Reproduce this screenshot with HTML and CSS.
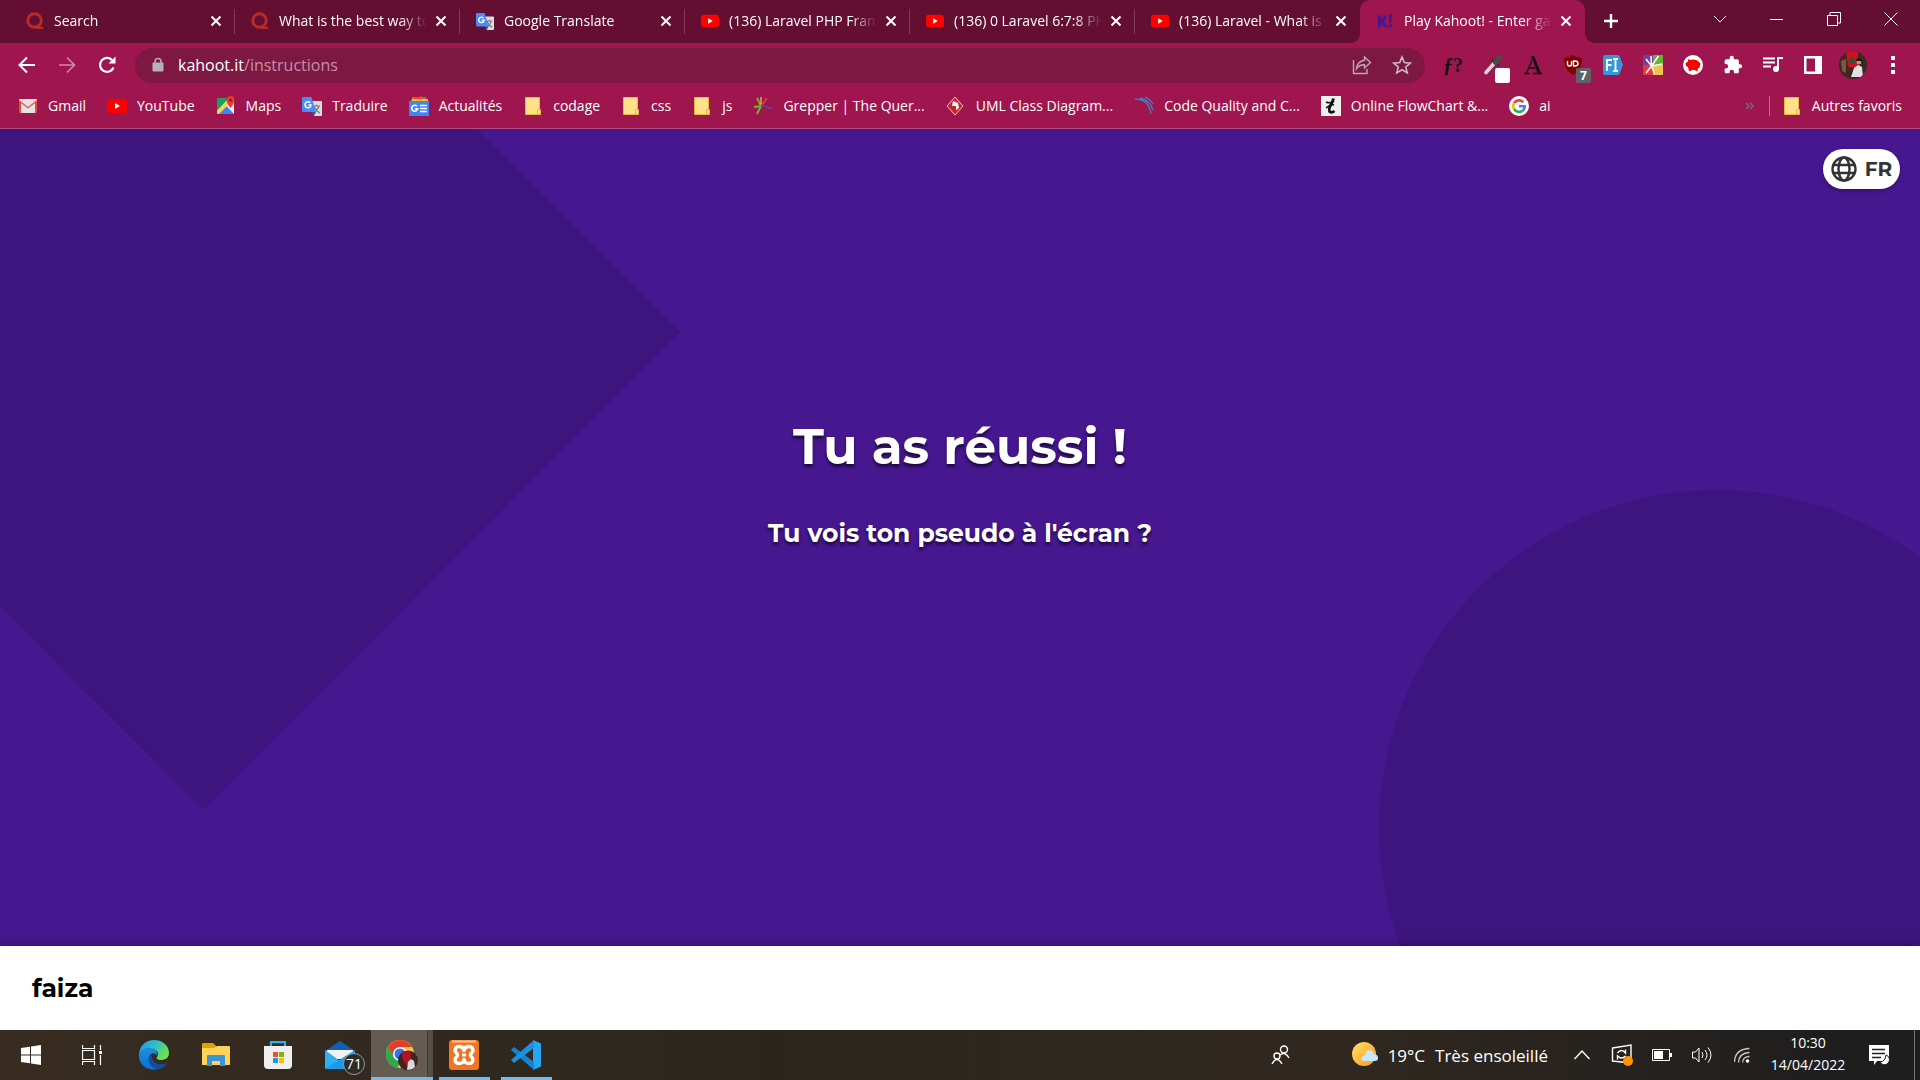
FILE: index.html
```html
<!DOCTYPE html>
<html lang="fr">
<head>
<meta charset="utf-8">
<title>Play Kahoot! - Enter game PIN here!</title>
<link rel="stylesheet" href="styles.css">
</head>
<body>
<svg class="sprite" aria-hidden="true">
  <symbol id="close" viewBox="0 0 12 12"><path d="M1.500 1.500l9 9M10.500 1.500l-9 9" stroke="#fff" stroke-width="2" fill="none"/></symbol>
  <symbol id="quora" viewBox="0 0 20 20"><circle cx="9.500" cy="9.500" r="7.500" fill="none" stroke="#b92b27" stroke-width="3.200"/><path d="M9 15h4l2 1.500h4V19h-6q-2.500 0-4-4z" fill="#b92b27"/></symbol>
  <symbol id="youtube" viewBox="0 0 20 20"><rect y="3" width="20" height="14" rx="3" fill="#f00"/><path d="M8 7v6l5-3z" fill="#fff"/></symbol>
  <symbol id="translate" viewBox="0 0 20 20"><path d="M8 5h11q1 0 1 1v13q0 1-1 1h-7z" fill="#dcdcdc"/><path d="M11 10h7M14.500 8.500V10M12 10q2 5 6 7M17 10q-1 4-5 6.500" stroke="#6b7f86" stroke-width="1.200" fill="none"/><path d="M1 1h8.500L14 16H1.500Q0 16 0 14.500V2q0-1 1-1z" fill="#4a8cf5"/><path d="M14 16h-4l2 4z" fill="#2d5ab8"/><path d="M8.300 6.800a3 3 0 1 0 .7 2.200H6.300" stroke="#fff" stroke-width="1.500" fill="none"/></symbol>
  <symbol id="folder" viewBox="0 0 20 20"><path d="M2.500 1.500h14v12h1v5h-15z" fill="#ffe28a" stroke="#e5b93c"/><path d="M14.500 18v-4q0-1 2-1" fill="none" stroke="#e5b93c"/></symbol>
</svg>

<header class="browser">
  <div class="tab-strip">
    <div class="tabs">
      <div class="tab"><svg class="favicon"><use href="#quora"/></svg><span class="tab-title">Search</span><button class="tab-close" aria-label="Fermer"><svg><use href="#close"/></svg></button></div>
      <div class="tab"><svg class="favicon"><use href="#quora"/></svg><span class="tab-title">What is the best way to</span><button class="tab-close" aria-label="Fermer"><svg><use href="#close"/></svg></button></div>
      <div class="tab"><svg class="favicon"><use href="#translate"/></svg><span class="tab-title">Google Translate</span><button class="tab-close" aria-label="Fermer"><svg><use href="#close"/></svg></button></div>
      <div class="tab"><svg class="favicon"><use href="#youtube"/></svg><span class="tab-title">(136) Laravel PHP Fram</span><button class="tab-close" aria-label="Fermer"><svg><use href="#close"/></svg></button></div>
      <div class="tab"><svg class="favicon"><use href="#youtube"/></svg><span class="tab-title">(136) 0 Laravel 6:7:8 PH</span><button class="tab-close" aria-label="Fermer"><svg><use href="#close"/></svg></button></div>
      <div class="tab"><svg class="favicon"><use href="#youtube"/></svg><span class="tab-title">(136) Laravel - What is</span><button class="tab-close" aria-label="Fermer"><svg><use href="#close"/></svg></button></div>
      <div class="tab active"><svg class="favicon" viewBox="0 0 20 20"><path d="M2 4h4v5l3-5h4l-4 6 4 7H9l-3-5v5H2zM14 3l4-1-1 10h-2zM14 14h4l-1 3h-3z" fill="#46178f"/></svg><span class="tab-title">Play Kahoot! - Enter ga</span><button class="tab-close" aria-label="Fermer"><svg><use href="#close"/></svg></button></div>
    </div>
    <button class="new-tab" aria-label="Nouvel onglet"><svg width="16" height="16" viewBox="0 0 16 16"><path d="M8 1v14M1 8h14" stroke="#fff" stroke-width="2.400"/></svg></button>
    <div class="window-controls">
      <button aria-label="Rechercher"><svg width="14" height="14" viewBox="0 0 14 14"><path d="M1 4l6 6 6-6" stroke="#fff" fill="none"/></svg></button>
      <button aria-label="Réduire"><svg width="14" height="14" viewBox="0 0 14 14"><path d="M0 7.500h13" stroke="#fff"/></svg></button>
      <button aria-label="Restaurer"><svg width="14" height="14" viewBox="0 0 14 14"><path d="M.5 3.500h10v10H.5zM3 3.500V.5h10.500V11H11" stroke="#fff" fill="none"/></svg></button>
      <button aria-label="Fermer"><svg width="14" height="14" viewBox="0 0 14 14"><path d="M.5.5l13 13M13.500.5l-13 13" stroke="#fff"/></svg></button>
    </div>
  </div>

  <div class="toolbar">
    <nav class="nav-buttons">
      <button aria-label="Retour"><svg width="20" height="20" viewBox="0 0 20 20"><path d="M18 10H3M10 2.500L2.500 10l7.500 7.500" stroke="#fff" stroke-width="2" fill="none"/></svg></button>
      <button aria-label="Avancer"><svg width="20" height="20" viewBox="0 0 20 20"><path d="M2 10h15M10 2.500l7.500 7.500-7.500 7.500" stroke="#cf8aa7" stroke-width="1.600" fill="none"/></svg></button>
      <button aria-label="Actualiser"><svg width="20" height="20" viewBox="0 0 20 20"><path d="M16.500 12.500a7 7 0 1 1-1.500-7.600" stroke="#fff" stroke-width="2.200" fill="none"/><path d="M18.500 1.500v7h-7z" fill="#fff"/></svg></button>
    </nav>
    <div class="address">
      <svg width="12" height="16" viewBox="0 0 12 16"><path d="M3 7V4.500a3 3 0 0 1 6 0V7" stroke="#b9a7b0" stroke-width="1.600" fill="none"/><rect x=".5" y="5.500" width="11" height="9" rx="1" fill="#b9b0b5"/></svg>
      <label class="host" for="path">kahoot.it</label><input id="path" class="path" type="text" value="/instructions">
      <button aria-label="Partager"><svg width="20" height="20" viewBox="0 0 20 20"><path d="M1.500 5v13.500H15V14" stroke="#c3a5b2" stroke-width="1.400" fill="none"/><path d="M12.500 2l6 5.500-6 5.500v-3.200q-5-.3-8 4 .5-7.300 8-8.500z" stroke="#c3a5b2" stroke-width="1.400" fill="none"/></svg></button>
      <button aria-label="Favori"><svg width="20" height="20" viewBox="0 0 20 20"><path d="M10 2l2.300 5.600 6 .5-4.600 3.900 1.500 5.900L10 14.700l-5.200 3.200L6.300 12 1.700 8.100l6-.5z" stroke="#ccbac2" stroke-width="1.600" fill="none"/></svg></button>
    </div>
    <div class="extensions">
      <button class="fx" aria-label="WhatFont"><i>ƒ</i>?</button>
      <button aria-label="Pipette"><svg width="20" height="20" viewBox="0 0 20 20"><path d="M3 17.500l8-9" stroke="#d9d9d9" stroke-width="3.600" stroke-linecap="round"/><path d="M9.500 5l5.500 5" stroke="#333" stroke-width="2.600" stroke-linecap="round"/><path d="M12.500 7.500l4-4.500" stroke="#4a4a4a" stroke-width="5" stroke-linecap="round"/></svg><span class="badge blank"></span></button>
      <button aria-label="Polices"><svg width="20" height="20" viewBox="0 0 20 20"><path d="M1 18.500h6M10 18.500h9M3.500 18L10 3M5 13h8" stroke="#111" stroke-width="1.400"/><path d="M8 1h3l7 17h-4z" fill="#111"/><path d="M9 4l5.500 14" stroke="#9f154e" stroke-width=".6"/></svg></button>
      <button aria-label="uBlock"><svg width="20" height="20" viewBox="0 0 20 20"><path d="M10 0q4 3 9 3 0 13-9 17Q1 16 1 3q5 0 9-3z" fill="#800000"/><path d="M4.500 6v3q0 2 2 2t2-2V6M10.500 6v5h1.500q3 0 3-2.500T12 6z" stroke="#fff" stroke-width="1.400" fill="none"/></svg><span class="badge">7</span></button>
      <button aria-label="Fontface"><svg width="20" height="20" viewBox="0 0 20 20"><path d="M2 0h12q2 0 2.500 1L20 10l-3.500 9q-.5 1-2.500 1H2q-2 0-2-2V2q0-2 2-2z" fill="#3498db"/><path d="M4 16V5h5M4 10h4.500M10 4h5M10 16h5M12.500 4v12" stroke="#fff" stroke-width="1.800" fill="none"/></svg></button>
      <button aria-label="Grepper"><svg width="20" height="20" viewBox="0 0 20 20"><path d="M0 0h10v10H0z" fill="#7040a0"/><path d="M10 0h10v10H10z" fill="#63b32e"/><path d="M0 10h10v10H0z" fill="#e8373a"/><path d="M10 10h10v10H10z" fill="#f2c14a"/><path d="M8.500 11L3 4M8.500 11L8 1M8.500 11l7-10M8.500 11l11-2M8.500 11l3 8M8.500 11L3 18" stroke="#fff" stroke-width="1.500"/></svg></button>
      <button aria-label="Piggy"><svg width="20" height="20" viewBox="0 0 20 20"><circle cx="10" cy="10" r="10" fill="#fff"/><path d="M2.500 8l2-1 1-3 2 1q5-1.500 8 1.500l2 2-1 4-2 1.500v2h-2v-1H8v1H6l-1-4-2-1z" fill="#f00"/></svg></button>
      <button aria-label="Extensions"><svg width="20" height="20" viewBox="0 0 24 24"><path d="M20.500 11H19V7c0-1.100-.9-2-2-2h-4V3.500a2.500 2.500 0 0 0-5 0V5H4c-1.100 0-2 .9-2 2v3.800h1.500a2.700 2.700 0 0 1 0 5.400H2V20c0 1.100.9 2 2 2h3.800v-1.500a2.700 2.700 0 0 1 5.400 0V22H17c1.100 0 2-.9 2-2v-4h1.500a2.500 2.500 0 0 0 0-5z" fill="#fff"/></svg></button>
      <button aria-label="Médias"><svg width="20" height="20" viewBox="0 0 20 20"><path d="M0 3.500h12M0 7.500h12M0 11.500h8" stroke="#fff" stroke-width="2"/><path d="M15 14V3h5" stroke="#fff" stroke-width="2" fill="none"/><circle cx="13" cy="14" r="3" fill="#fff"/></svg></button>
      <button aria-label="Panneau latéral"><svg width="18" height="18" viewBox="0 0 18 18"><path d="M0 0h18v18H0zM2.500 2.500v13H11v-13z" fill="#fff" fill-rule="evenodd"/></svg></button>
      <button aria-label="Profil"><svg width="28" height="28" viewBox="0 0 28 28"><clipPath id="round"><circle cx="14" cy="14" r="14"/></clipPath><g clip-path="url(#round)"><path d="M0 0h28v28H0z" fill="#3b2a22"/><path d="M7 0h12v17l-10-1z" fill="#cf1220"/><path d="M13 5l1 3 3 .5-2 2 .5 3-2.500-1.500-2.500 1.500.5-3-2-2 3-.5z" fill="#185c2c"/><path d="M2 10l5-2v14l-4-2z" fill="#7a5a3c"/><path d="M15 17l4-3 4 2 1 10H12z" fill="#e4e0e2"/><circle cx="20" cy="11" r="2.500" fill="#c09078"/><path d="M17 10q0-3 3-3t4 7l-2-4z" fill="#1d1514"/></g></svg></button>
      <button aria-label="Menu"><svg width="4" height="18" viewBox="0 0 4 18"><path d="M0 0h4v4H0zM0 7h4v4H0zM0 14h4v4H0z" fill="#fff"/></svg></button>
    </div>
  </div>

  <nav class="bookmarks">
    <a href="#"><svg viewBox="0 0 20 20"><path d="M1 3h18v14H1z" fill="#e3e3e3"/><path d="M1 17V4l9 7 9-7v13h-2V7l-7 5.500L3 7v10z" fill="#e04a3f"/></svg>Gmail</a>
    <a href="#"><svg><use href="#youtube"/></svg>YouTube</a>
    <a href="#"><svg viewBox="0 0 20 20"><path d="M1 2h17v16H1z" fill="#eceff1"/><path d="M1 2h12L1 15z" fill="#1e9e58"/><path d="M1 18l8.500-9L18 18z" fill="#4285f4"/><path d="M1 15L14 3v4L3 18H1z" fill="#fdd34c"/><path d="M14.500 0a4 4 0 0 1 4 4q0 3-4 8-4-5-4-8a4 4 0 0 1 4-4z" fill="#e33b2e"/><circle cx="14.500" cy="4" r="1.500" fill="#8c1d18"/></svg>Maps</a>
    <a href="#"><svg><use href="#translate"/></svg>Traduire</a>
    <a href="#"><svg viewBox="0 0 20 20"><path d="M3 1l14 0v6H3z" fill="#34a853"/><path d="M2 3l11-3 2 6H2z" fill="#ea4335"/><path d="M3 3h16v4H3z" fill="#fbbc04"/><path d="M0 5h20v15H0z" fill="#4285f4"/><path d="M8 10.200a3 3 0 1 0 .7 2.500H6M11 9.500h7M11 12.500h7M11 15.500h7" stroke="#fff" stroke-width="1.600" fill="none"/></svg>Actualités</a>
    <a href="#"><svg><use href="#folder"/></svg>codage</a>
    <a href="#"><svg><use href="#folder"/></svg>css</a>
    <a href="#"><svg><use href="#folder"/></svg>js</a>
    <a href="#"><svg viewBox="0 0 20 20"><path d="M8 10L4 2M8 10L1 11M8 10L4 18" stroke="#6ab42f" stroke-width="2"/><path d="M8 10V1" stroke="#d9b23a" stroke-width="1.500"/><path d="M8 10l6-8" stroke="#e5443b" stroke-width="1.500"/><path d="M8 9l11 4" stroke="#5c4aa0" stroke-width="1.500"/></svg>Grepper | The Quer...</a>
    <a href="#"><svg viewBox="0 0 20 20"><path d="M9 1l8 9-8 9-8-9z" fill="#c8232c" stroke="#f0c9c9"/><path d="M7 5l5 2 1 5-3 2 0-4-4 0z" fill="#fff"/></svg>UML Class Diagram...</a>
    <a href="#"><svg viewBox="0 0 20 20"><path d="M1 3q14 0 16 15M6 2q10 2 13 12M11 1q5 2 8 7" stroke="#4b7dbd" stroke-width="1.300" fill="none"/></svg>Code Quality and C...</a>
    <a href="#"><svg viewBox="0 0 20 20"><path d="M0 0h20v20H0z" fill="#f0f0f0"/><path d="M12.500 2.500q-1 4-3 7t-1 6q2 2 5-.5" stroke="#111" stroke-width="2.800" fill="none"/><path d="M5 6q4 2 8-1M5 12q5-4 8-3" stroke="#111" stroke-width="1.600" fill="none"/></svg>Online FlowChart &amp;...</a>
    <a href="#"><svg viewBox="0 0 20 20"><circle cx="10" cy="10" r="10" fill="#fff"/><g fill="none" stroke-width="2.600"><path d="M14.200 6.200A5.800 5.800 0 0 0 5 7.200" stroke="#ea4335"/><path d="M5 7.200a5.800 5.800 0 0 0 0 5.600" stroke="#fbbc05"/><path d="M5 12.800a5.800 5.800 0 0 0 8.800 1.700" stroke="#34a853"/><path d="M13.800 14.500a5.500 5.500 0 0 0 2-4.200H10" stroke="#4285f4"/></g></svg>ai</a>
    <button class="overflow" aria-label="Autres"><svg width="10" height="8" viewBox="0 0 10 8"><path d="M1 1l3 3-3 3M5 1l3 3-3 3" stroke="#7d6470" stroke-width="1.500" fill="none"/></svg></button>
    <a class="others" href="#"><svg><use href="#folder"/></svg>Autres favoris</a>
  </nav>
</header>

<main class="game">
  <svg class="shapes" viewBox="0 0 1920 817" preserveAspectRatio="xMidYMid slice" aria-hidden="true"><path d="M203-274L680 203 203 681-274 203z"/><circle cx="1717" cy="699" r="338"/></svg>
  <button class="language"><svg width="26" height="26" viewBox="0 0 26 26" fill="none" stroke="#333" stroke-width="2.400"><circle cx="13" cy="13" r="11.500"/><ellipse cx="13" cy="13" rx="5.500" ry="11.500"/><path d="M2.500 9h21M2.500 17h21"/></svg>FR</button>
  <h1>Tu as réussi !</h1>
  <p>Tu vois ton pseudo à l'écran ?</p>
</main>
<footer class="player">faiza</footer>

<div class="taskbar">
  <div class="apps">
    <button aria-label="Démarrer"><svg width="20" height="20" viewBox="0 0 20 20"><path d="M0 3l9-1.300V9.500H0zM10 1.500L20 0v9.500H10zM0 10.500h9v7.800L0 17zM10 10.500h10V20l-10-1.500z" fill="#fff"/></svg></button>
    <button aria-label="Vue des tâches"><svg width="20" height="20" viewBox="0 0 20 20"><path d="M.5 0v3.500h12V0M.5 5.500h12v9H.5zM.5 20v-3.500h12V20M18.500 0v5M18.500 10v10" stroke="#fff" stroke-width="1.200" fill="none"/><path d="M17 6h3v3h-3z" fill="#fff"/></svg></button>
    <button aria-label="Edge"><svg width="30" height="30" viewBox="0 0 30 30"><defs><linearGradient id="e1" x1="0" y1="0" x2="1" y2=".5"><stop offset=".1" stop-color="#1f9de0"/><stop offset=".55" stop-color="#34c0c4"/><stop offset="1" stop-color="#6be04a"/></linearGradient><linearGradient id="e2" x1="0" y1="0" x2="0" y2="1"><stop offset="0" stop-color="#1b8fe0"/><stop offset="1" stop-color="#0d6fd0"/></linearGradient></defs><path d="M0 14C1 5 7 0 15 0c9 0 15 6 15 13 0 5-4 7-8 7-4 0-5-2-4-3 3-5-1-8-6-8-6 0-10 3-12 5z" fill="url(#e1)"/><path d="M0 14c2-5 7-7 11-6 5 0 8 4 7 7-4-4-9 0-8 5 1 6 6 9 10 9C9 32-1 25 0 14z" fill="url(#e2)"/><path d="M10 17c-2 9 7 12 10 12 4-1 7-4 8-6-6 3-16 1-15-8-1 0-2 1-3 2z" fill="#104f9e"/></svg></button>
    <button aria-label="Explorateur"><svg width="28" height="24" viewBox="0 0 28 24"><path d="M0 1q0-1 1-1h10l3 3v4H0z" fill="#e5a000"/><path d="M0 5h12l3-2h12q1 0 1 1v17q0 1-1 1H0z" fill="#ffd35c"/><path d="M5 23V13q0-1 1-1h16q1 0 1 1v10h-5v-5h-8v5z" fill="#3b93d9"/></svg></button>
    <button aria-label="Store"><svg width="30" height="30" viewBox="0 0 30 30"><path d="M8 7V2.200h14V7" stroke="#2bb0ef" stroke-width="2.200" fill="none"/><path d="M1 6h28v19q0 4-4 4H5q-4 0-4-4z" fill="#efefef"/><path d="M10 12h5v5h-5z" fill="#f25022"/><path d="M16 12h5v5h-5z" fill="#7fba00"/><path d="M10 18h5v5h-5z" fill="#00a4ef"/><path d="M16 18h5v5h-5z" fill="#ffb900"/></svg></button>
    <button aria-label="Courrier"><svg width="30" height="30" viewBox="0 0 30 30"><path d="M0 11L15 1l15 10v5H0z" fill="#0f5fb4"/><path d="M2 10h26v9H2z" fill="#f2f2f2"/><path d="M0 10l15 11-15 8z" fill="#2cb0ee"/><path d="M30 10L0 29h30z" fill="#1b9be8"/></svg><span class="count">71</span></button>
    <button class="open current" aria-label="Chrome"><svg width="32" height="32" viewBox="0 0 32 32"><circle cx="14" cy="15" r="14" fill="#fcc934"/><path d="M1.900 8A14 14 0 0 1 26.100 8H14l-6 10z" fill="#e33b2e"/><path d="M1.900 8l7 11 5 2-2 8A14 14 0 0 1 1.900 8z" fill="#2da94f"/><circle cx="14" cy="15" r="7" fill="#fff"/><circle cx="14" cy="15" r="5.500" fill="#2f73e8"/><circle cx="22" cy="21.500" r="10" fill="#40241f"/><path d="M16 14q6-4 9 0l-1 13q-8-1-8-13z" fill="#b51226"/><path d="M22 23l3-3 3 2 1 6q-3 3-8 3z" fill="#ddd8da"/></svg></button>
    <button class="open" aria-label="XAMPP"><svg width="30" height="30" viewBox="0 0 30 30"><rect width="30" height="30" rx="3" fill="#f07522"/><path d="M3 1.500h24" stroke="#ffc79d" stroke-width="2"/><path d="M15 10.500C14.500 7 12 6.500 10 6.500 6 6.500 5 11 7.500 13q2 2 0 4C5 19 6 23.500 10 23.500c2 0 4.500-.5 5-4 .5 3.500 3 4 5 4 4 0 5-4.500 2.500-6.500q-2-2 0-4C25 11 24 6.500 20 6.500c-2 0-4.500.5-5 4z" stroke="#fff" stroke-width="3.400" fill="none" stroke-linejoin="round"/><path d="M13 15h4" stroke="#fff" stroke-width="3"/></svg></button>
    <button class="open" aria-label="VS Code"><svg width="30" height="30" viewBox="0 0 30 30"><path d="M22 0l8 3.500v23L22 30z" fill="#27a4f2"/><path d="M0 10l3-3 20 15v8z" fill="#1584cf"/><path d="M0 20l3 3L23 8V0z" fill="#1b90de"/></svg></button>
  </div>
  <div class="tray">
    <button class="people" aria-label="Contacts"><svg width="20" height="20" viewBox="0 0 20 20" stroke="#fff" stroke-width="1.400" fill="none"><circle cx="13" cy="4.500" r="3.500"/><path d="M9 10q5-4 9 3"/><circle cx="6" cy="11" r="3"/><path d="M1 19q5-9 10 0"/></svg></button>
    <button class="weather"><svg width="26" height="26" viewBox="0 0 26 26"><defs><linearGradient id="sun" x1="0" y1="0" x2="1" y2="1"><stop offset="0" stop-color="#ffdf6b"/><stop offset="1" stop-color="#ff9b17"/></linearGradient></defs><circle cx="12" cy="12" r="12" fill="url(#sun)"/><path d="M12 19q-3-.5-2.500-3T13 13q0-4 4-5 4 0 5 4 4 .5 4 4t-4 3z" fill="#c9e6fb"/></svg><span>19°C</span><span>Très ensoleillé</span></button>
    <button aria-label="Icônes cachées"><svg width="16" height="16" viewBox="0 0 16 16"><path d="M.5 12L8 4l7.500 8" stroke="#fff" stroke-width="1.400" fill="none"/></svg></button>
    <button aria-label="Mises à jour"><svg width="22" height="22" viewBox="0 0 22 22"><path d="M1.500 4L20 1v18L1.500 17z" stroke="#fff" stroke-width="1.400" fill="none"/><path d="M6.500 9q4-5 8 0V5.500M14.500 12q-4 4-8 0v3.500" stroke="#fff" stroke-width="1.400" fill="none"/><circle cx="17" cy="17" r="5" fill="#ff9500"/></svg></button>
    <button aria-label="Batterie"><svg width="20" height="12" viewBox="0 0 20 12"><path d="M.5.5h17v11H.5z" stroke="#fff" fill="none"/><path d="M2 2h9v8H2zM18 4h2v4h-2z" fill="#fff"/></svg></button>
    <button aria-label="Volume"><svg width="20" height="18" viewBox="0 0 20 18"><path d="M.5 6h3L7 2v14l-3.500-4h-3zM10 6q2 3 0 6M13 4q4 5 0 10M16 1.500q6 7.500 0 15" stroke="#fff" fill="none"/></svg></button>
    <button aria-label="Wi-Fi"><svg width="16" height="16" viewBox="0 0 16 16"><path d="M.5 15Q1 2 15.500 1.500M4.500 15.500Q5 6 15.500 5.500M8.500 15.500q.5-6 7-6" stroke="#c9c6c2" stroke-width="1.300" fill="none"/><circle cx="13.500" cy="14" r="1.800" fill="#fff"/></svg></button>
    <button class="clock"><span>10:30</span><span>14/04/2022</span></button>
    <button class="notify" aria-label="Notifications"><svg width="21" height="21" viewBox="0 0 21 21"><path d="M0 0h20v16H8l-3 4v-4H0z" fill="#fff"/><path d="M3 4.500h13M3 8.500h13M3 12.500h9" stroke="#222" stroke-width="1.400"/><path d="M17 10a5 5 0 1 1-6 7q5 0 6-7z" fill="#fff" stroke="#222"/></svg></button>
    <button class="show-desktop" aria-label="Bureau"></button>
  </div>
</div>
</body>
</html>
```
FILE: styles.css
```css
* { box-sizing: border-box; }

body {
  margin: 0;
  min-height: 100vh;
  display: flex;
  flex-direction: column;
  font-family: "Segoe UI", "Open Sans", "Noto Sans", sans-serif;
  font-size: 14px;
  color: #fff;
}

button {
  border: 0;
  padding: 0;
  background: none;
  color: inherit;
  font: inherit;
  display: flex;
  align-items: center;
  justify-content: center;
}

svg { flex: none; display: block; }

.sprite { width: 0; height: 0; position: absolute; }

/* Browser chrome */
.browser { background: #9f154e; border-bottom: 1px solid #b54c78; }

.tab-strip { height: 43px; background: #640f31; display: flex; align-items: flex-start; padding-left: 10px; }

.tabs { display: flex; height: 43px; min-width: 0; }

.tab {
  width: 225px;
  display: flex;
  align-items: center;
  padding: 0 9px 2px 16px;
  background: linear-gradient(#95577199, #95577199) right 9px / 1px 25px no-repeat;
}

.tab:has(+ .active) { background: none; }

.tab.active {
  position: relative;
  background: #9f154e;
  border-radius: 10px 10px 0 0;
}

.tab.active::before,
.tab.active::after {
  content: "";
  position: absolute;
  bottom: 0;
  width: 10px;
  height: 10px;
}

.tab.active::before { right: 100%; background: radial-gradient(circle at 0 0, #640f31 10px, #9f154e 10px); }
.tab.active::after { left: 100%; background: radial-gradient(circle at 100% 0, #640f31 10px, #9f154e 10px); }

.favicon { width: 18px; height: 18px; }

.tab-title {
  flex: 1;
  margin-left: 10px;
  overflow: hidden;
  white-space: nowrap;
  mask-image: linear-gradient(to right, #000 calc(100% - 28px), transparent);
}

.tab-close { width: 20px; height: 20px; margin-left: 4px; }
.tab-close svg { width: 12px; height: 12px; }

.new-tab { width: 36px; height: 42px; margin-left: 8px; }

.window-controls { display: flex; margin-left: auto; padding-right: 1px; }
.window-controls button { width: 57px; height: 37px; }

.toolbar { display: flex; align-items: center; height: 44px; padding: 0 7px; }

.nav-buttons { display: flex; }
.nav-buttons button,
.extensions button { width: 40px; height: 36px; position: relative; }

.address {
  flex: 1;
  height: 35px;
  margin: 0 8px;
  padding: 0 3px 0 17px;
  display: flex;
  align-items: center;
  border-radius: 18px;
  background: #7d1842;
  font-size: 16px;
}

.host { margin-left: 14px; }

.path {
  flex: 1;
  min-width: 0;
  border: 0;
  padding: 0;
  background: none;
  color: #c491a7;
  font: inherit;
}

.address button { width: 40px; height: 35px; }

.extensions { display: flex; }

.extensions .fx { color: #111; font: 700 20px "Liberation Serif", serif; }

.badge {
  position: absolute;
  right: 2px;
  bottom: 0;
  width: 15px;
  height: 15px;
  border-radius: 2px;
  background: #5f6368;
  font-size: 12px;
  line-height: 15px;
  font-weight: 700;
}

.badge.blank { right: 3px; background: #fff; }

.bookmarks { display: flex; align-items: center; height: 41px; padding: 0 18px 4px; gap: 21px; }

.bookmarks a {
  display: flex;
  align-items: center;
  gap: 10px;
  color: #fff;
  text-decoration: none;
  white-space: nowrap;
}

.bookmarks a svg { width: 20px; height: 20px; }

.overflow { margin-left: auto; width: 10px; }

.bookmarks .others {
  margin-left: -7px;
  padding-left: 13px;
  background: linear-gradient(#c26f90, #c26f90) left / 1px 20px no-repeat;
}

/* Lobby */
.game {
  flex: 1;
  position: relative;
  display: flex;
  flex-direction: column;
  align-items: center;
  justify-content: center;
  padding-bottom: 110px;
  overflow: hidden;
  background: #46178f;
  font-family: Montserrat, Inter, sans-serif;
  font-weight: 700;
  text-shadow: 0 3px 3px #1e0a40;
}

.shapes { position: absolute; inset: 0; width: 100%; height: 100%; fill: #3e147f; }

.game h1 { position: relative; margin: 0 0 40px; font-size: 50px; line-height: 60px; }
.game p { position: relative; margin: 0; font-size: 25px; line-height: 32px; }

.language {
  position: absolute;
  top: 20px;
  right: 20px;
  width: 77px;
  height: 40px;
  gap: 8px;
  border-radius: 20px;
  background: #fff;
  color: #333;
  font-size: 20px;
  box-shadow: 0 2px 4px #0004;
  text-shadow: none;
}

.player {
  position: relative;
  height: 84px;
  padding: 0 32px;
  display: flex;
  align-items: center;
  background: #fff;
  color: #000;
  font: 700 25px Montserrat, Inter, sans-serif;
  box-shadow: 0 -2px 12px #0003;
}

/* Taskbar */
.taskbar {
  position: relative;
  height: 50px;
  display: flex;
  justify-content: space-between;
  background: linear-gradient(to right, #382c21, #2b261d 40%, #302820 70%, #1f1e1e 95%);
}

.apps, .tray { display: flex; }
.apps { padding-left: 1px; }
.apps button { width: 62px; height: 50px; position: relative; }
.apps button:first-child { width: 60px; }

.apps .open { background: linear-gradient(#76b9ed, #76b9ed) center bottom / 51px 3px no-repeat; }

.apps .current {
  background:
    linear-gradient(#76b9ed, #76b9ed) center bottom / 100% 3px no-repeat,
    linear-gradient(to right, #645b52 56px, #3f3a34 56px, #3f3a34 57px, #544e47 57px);
}

.count {
  position: absolute;
  left: 34px;
  top: 23px;
  width: 22px;
  height: 22px;
  border: 1px solid #999;
  border-radius: 50%;
  background: #2b2b2b;
  font-size: 14px;
  line-height: 20px;
}

.tray button { width: 40px; height: 50px; }
.tray .people { margin-right: 51px; }
.tray .weather { width: auto; padding-right: 14px; gap: 10px; font-size: 17px; }
.tray .clock { width: 92px; flex-direction: column; line-height: 22px; padding-bottom: 2px; }
.tray .notify { width: 50px; }
.tray .show-desktop { width: 6px; margin-left: 10px; border-left: 1px solid #777; }
```
